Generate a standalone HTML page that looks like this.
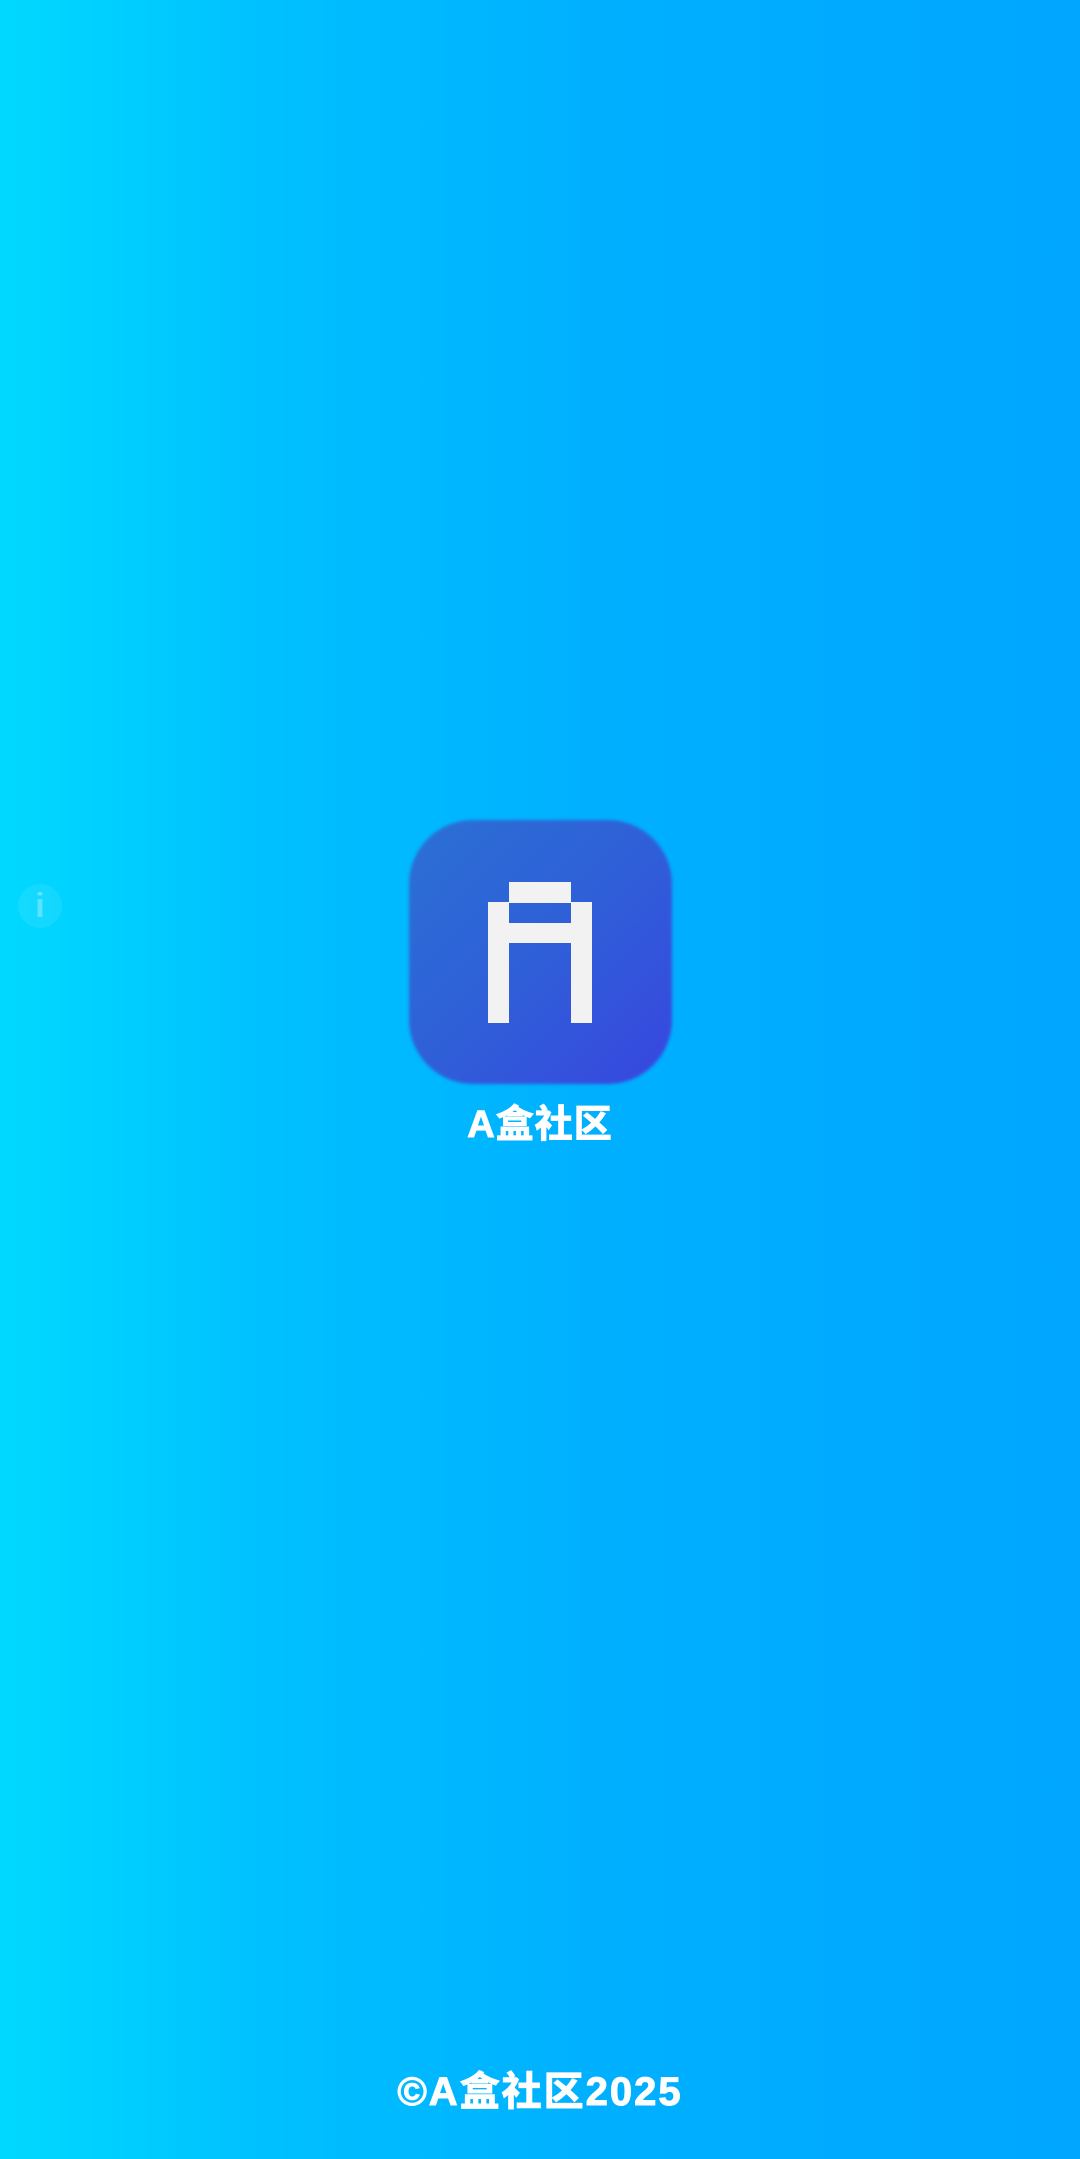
<!DOCTYPE html>
<html><head><meta charset="utf-8"><style>
html,body{margin:0;padding:0;}
body{width:1080px;height:2159px;position:relative;overflow:hidden;background:linear-gradient(90deg,#00d9ff 0%,#00c0ff 25%,#00b0ff 55%,#00a6ff 100%);font-family:"Liberation Sans","Noto Sans CJK SC",sans-serif;}
.icon{position:absolute;left:409px;top:820px;width:263px;height:264px;border-radius:64px;background:linear-gradient(135deg,#2b70d4 0%,#2f5fd8 50%,#3846e0 100%);filter:blur(1.5px);}
.b{position:absolute;background:#f2f2f2;}
.t{position:absolute;left:0;width:1080px;text-align:center;color:#fff;font-weight:bold;-webkit-text-stroke:1px #fff;}
.info{position:absolute;left:18px;top:884px;width:44px;height:44px;border-radius:50%;background:rgba(255,255,255,0.08);color:rgba(255,255,255,0.3);font-weight:bold;font-size:34px;text-align:center;line-height:44px;}
</style></head><body>
<div class="info">i</div>
<div class="icon"></div>
<div class="b" style="left:509px;top:882px;width:62px;height:21px"></div>
<div class="b" style="left:488px;top:902px;width:21px;height:121px"></div>
<div class="b" style="left:571px;top:902px;width:21px;height:121px"></div>
<div class="b" style="left:508px;top:923px;width:64px;height:20px"></div>
<div class="t" style="top:1102px;font-size:38px;line-height:46px;letter-spacing:1px">A盒社区</div>
<div class="t" style="top:2068px;font-size:40px;line-height:48px;letter-spacing:2px">©A盒社区2025</div>
</body></html>
